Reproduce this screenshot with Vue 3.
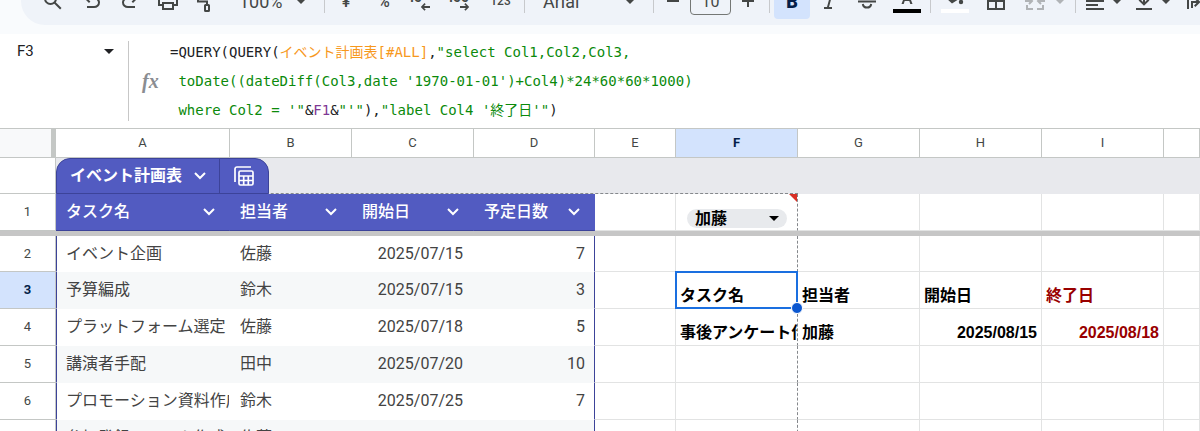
<script setup>
import { ref } from 'vue'

const columns = ['A', 'B', 'C', 'D', 'E', 'F', 'G', 'H', 'I', '']
const tableHeaders = ['タスク名', '担当者', '開始日', '予定日数']

const nameBox = ref('F3')
const fontSize = ref('10')
const person = ref('加藤')
const people = ['加藤', '佐藤', '鈴木', '田中']

const rows = [
  { no: 2, task: 'イベント企画', owner: '佐藤', start: '2025/07/15', days: 7 },
  { no: 3, task: '予算編成', owner: '鈴木', start: '2025/07/15', days: 3, f: 'タスク名', g: '担当者', h: '開始日', i: '終了日' },
  { no: 4, task: 'プラットフォーム選定', owner: '佐藤', start: '2025/07/18', days: 5, f: '事後アンケート作成', g: '加藤', h: '2025/08/15', i: '2025/08/18' },
  { no: 5, task: '講演者手配', owner: '田中', start: '2025/07/20', days: 10 },
  { no: 6, task: 'プロモーション資料作成', owner: '鈴木', start: '2025/07/25', days: 7 },
  { no: 7, task: '参加登録フォーム作成', owner: '佐藤', start: '2025/07/28', days: 3 }
]

const isDate = (value) => /^\d{4}\//.test(value || '')
</script>

<template>
  <div class="sheet-app">
    <header class="top">
      <div class="toolbar" role="toolbar">
        <button class="tool search" aria-label="検索">
          <svg viewBox="0 0 24 24"><g fill="none" stroke="currentColor" stroke-width="2"><circle cx="9.5" cy="9.5" r="5.5" /><path d="M13.5 13.5l6.3 6.3" /></g></svg>
        </button>
        <button class="tool" aria-label="元に戻す">
          <svg viewBox="0 0 24 24"><path d="M7 19v-2h7.1q1.575 0 2.738-1T18 13.5 16.838 11 14.1 10H7.8l2.6 2.6L9 14 4 9l5-5 1.4 1.4L7.8 8h6.3q2.425 0 4.163 1.575T20 13.5t-1.737 3.925T14.1 19z" /></svg>
        </button>
        <button class="tool" aria-label="やり直し">
          <svg viewBox="0 0 24 24"><path d="M9.9 19q-2.425 0-4.163-1.575T4 13.5t1.737-3.925T9.9 8h6.3l-2.6-2.6L15 4l5 5-5 5-1.4-1.4 2.6-2.6H9.9q-1.575 0-2.738 1T6 13.5 7.162 16 9.9 17H17v2z" /></svg>
        </button>
        <button class="tool" aria-label="印刷">
          <svg viewBox="0 0 24 24"><path d="M19 8h-1V3H6v5H5c-1.66 0-3 1.34-3 3v6h4v4h12v-4h4v-6c0-1.66-1.34-3-3-3zM8 5h8v3H8V5zm8 12v2H8v-4h8v2zm2-2v-2H6v2H4v-4c0-.55.45-1 1-1h14c.55 0 1 .45 1 1v4h-2z" /></svg>
        </button>
        <button class="tool" aria-label="書式を貼り付け">
          <svg viewBox="0 0 24 24"><g fill="none" stroke="currentColor" stroke-width="2"><rect x="7" y="3" width="12" height="4" /><path d="M7 5H4v7.5h9V16" /><rect x="11" y="16" width="4" height="6" rx="0.5" /></g></svg>
        </button>
        <button class="tool menu zoom">100%<svg class="caret" viewBox="0 0 10 5"><path d="M0 0h10L5 5z" /></svg></button>
        <span class="divider"></span>
        <button class="tool symbol">¥</button>
        <button class="tool symbol">%</button>
        <button class="tool" aria-label="小数点以下の桁数を減らす">
          <svg viewBox="0 0 24 24"><text x="0" y="13" class="digits">.0</text><path d="M20 17h-6l1.7-1.7-1.2-1.2L10.800 18l3.700 3.800 1.200-1.200L14 19h6z" /></svg>
        </button>
        <button class="tool" aria-label="小数点以下の桁数を増やす">
          <svg viewBox="0 0 24 24"><text x="1" y="13" class="digits">.00</text><path d="M12 17h6l-1.700-1.700 1.200-1.200L21.200 18l-3.700 3.800-1.200-1.200L18 19h-6z" /></svg>
        </button>
        <button class="tool number-format">123</button>
        <span class="divider"></span>
        <button class="tool menu font">Arial<svg class="caret" viewBox="0 0 10 5"><path d="M0 0h10L5 5z" /></svg></button>
        <span class="divider"></span>
        <button class="tool step" aria-label="フォントサイズを縮小">
          <svg viewBox="0 0 24 24"><path d="M6 11h12v2H6z" /></svg>
        </button>
        <input v-model="fontSize" class="font-size" aria-label="フォントサイズ" />
        <button class="tool step" aria-label="フォントサイズを拡大">
          <svg viewBox="0 0 24 24"><path d="M6 11h5V6h2v5h5v2h-5v5h-2v-5H6z" /></svg>
        </button>
        <span class="divider wide"></span>
        <button class="tool bold active">B</button>
        <button class="tool" aria-label="斜体">
          <svg viewBox="0 0 24 24"><path d="M7 20v-2h3l3-11h-3V5h8v2h-3l-3 11h3v2z" /></svg>
        </button>
        <button class="tool" aria-label="取り消し線">
          <svg viewBox="0 0 24 24"><g fill="none" stroke="currentColor" stroke-width="2"><path d="M3 12.500h18M7.800 15c.4 2.600 2 3.600 4.200 3.600s3.800-1 4.200-3.600M16 8c-.5-2-2-3-4-3S8 6 8 8.500" /></g></svg>
        </button>
        <button class="tool text-color" aria-label="テキストの色">
          <svg class="wide-icon" viewBox="0 0 28 24"><path d="M8.500 15L13 3h2l4.500 12h-2.200l-1-3h-4.600l-1 3zM12.400 10h3.200L14 5.400z" /><path fill="#000" d="M0 20h28v4H0z" /></svg>
        </button>
        <span class="divider"></span>
        <button class="tool fill" aria-label="塗りつぶしの色">
          <svg class="wide-icon" viewBox="0 0 28 24"><path d="M10 2l8 8-7 4.500L5 9zM20 9s-2.200 2.800-2.200 4a2.200 2.200 0 0 0 4.400 0c0-1.200-2.200-4-2.200-4z" /><path fill="#fff" d="M0 20h28v4H0z" /></svg>
        </button>
        <button class="tool" aria-label="枠線">
          <svg viewBox="0 0 24 24"><path d="M3 3v18h18V3zm8 16H5v-6h6zm0-8H5V5h6zm8 8h-6v-6h6zm0-8h-6V5h6z" /></svg>
        </button>
        <button class="tool merge" aria-label="セルを結合">
          <svg viewBox="0 0 24 24"><g fill="none" stroke="currentColor" stroke-width="2"><path d="M10 4H4v4M14 4h6v4M4 16v4h6M20 16v4h-6M2 12h7M6 9l3 3-3 3M22 12h-7M18 9l-3 3 3 3" /></g></svg>
          <svg class="caret" viewBox="0 0 10 5"><path d="M0 0h10L5 5z" /></svg>
        </button>
        <span class="divider"></span>
        <button class="tool pair" aria-label="水平方向の配置">
          <svg viewBox="0 0 24 24"><path d="M3 3h18v2H3zM3 7h12v2H3zM3 11h18v2H3zM3 15h12v2H3zM3 19h18v2H3z" /></svg>
          <svg class="caret" viewBox="0 0 10 5"><path d="M0 0h10L5 5z" /></svg>
        </button>
        <button class="tool pair" aria-label="垂直方向の配置">
          <svg viewBox="0 0 24 24"><path d="M11 3h2v10l3-3 1.400 1.400L12 16.800l-5.400-5.400L8 10l3 3zM4 19h16v2H4z" /></svg>
          <svg class="caret" viewBox="0 0 10 5"><path d="M0 0h10L5 5z" /></svg>
        </button>
        <button class="tool" aria-label="テキストを折り返す">
          <svg viewBox="0 0 24 24"><path d="M4 3h2v17H4zM18 3h2v17h-2zM8 12h5.500L11 9.500 12.400 8l5 5-5 5L11 16.500l2.500-2.500H10v5H8z" /></svg>
        </button>
      </div>
    </header>

    <section class="formula-bar">
      <div class="name-box">
        <input v-model="nameBox" aria-label="名前ボックス" />
        <button aria-label="名前付き範囲"><svg class="caret" viewBox="0 0 10 5"><path d="M0 0h10L5 5z" /></svg></button>
      </div>
      <span class="fx">fx</span>
      <div class="formula" role="textbox" aria-label="数式" aria-multiline="true" contenteditable="true" spellcheck="false">
        <div>=QUERY(QUERY(<span class="range">イベント計画表[#ALL]</span>,<span class="str">"select Col1,Col2,Col3,</span></div>
        <div class="str">&nbsp;toDate((dateDiff(Col3,date '1970-01-01')+Col4)*24*60*60*1000)</div>
        <div>&nbsp;<span class="str">where Col2 = '"</span>&amp;<span class="cell-ref">F1</span>&amp;<span class="str">"'"</span>),<span class="str">"label Col4 '終了日'"</span>)</div>
      </div>
    </section>

    <table class="grid">
      <colgroup>
        <col class="col-no" />
        <col class="col-a" />
        <col class="col-std" />
        <col class="col-std" />
        <col class="col-d" />
        <col class="col-e" />
        <col class="col-std" />
        <col class="col-std" />
        <col class="col-std" />
        <col class="col-std" />
        <col />
      </colgroup>
      <thead>
        <tr>
          <th class="corner"></th>
          <th v-for="col in columns" :key="col" :class="{ selected: col === 'F' }">{{ col }}</th>
        </tr>
      </thead>
      <tbody>
        <tr class="tab-row">
          <th></th>
          <td class="band range-top" colspan="6">
            <div class="table-tab">
              <button class="tab-name">
                イベント計画表
                <svg class="chevron" viewBox="0 0 12 8"><path d="M1 1l5 5 5-5" /></svg>
              </button>
              <button class="tab-icon" aria-label="テーブルのビュー">
                <svg viewBox="0 0 20 20"><g fill="none" stroke="currentColor" stroke-width="1.700"><path d="M1 16V3a2 2 0 0 1 2-2h14" /><rect x="5" y="5" width="14" height="14" rx="1.500" /><path d="M5 10h14M5 14.500h14M9.700 10v9M14.300 10v9" /></g></svg>
              </button>
            </div>
          </td>
          <td class="band" colspan="4"></td>
        </tr>
        <tr class="first-row">
          <th>1</th>
          <td v-for="title in tableHeaders" :key="title" class="table-head">
            <div class="head-cell">
              <span>{{ title }}</span>
              <svg class="chevron" viewBox="0 0 12 8"><path d="M1 1l5 5 5-5" /></svg>
            </div>
          </td>
          <td></td>
          <td class="col-f chip-cell">
            <div class="chip">
              <select v-model="person" aria-label="担当者">
                <option v-for="p in people" :key="p">{{ p }}</option>
              </select>
              <svg class="caret" viewBox="0 0 10 5"><path d="M0 0h10L5 5z" /></svg>
            </div>
            <span class="error-mark"></span>
          </td>
          <td></td>
          <td></td>
          <td></td>
          <td></td>
        </tr>
        <tr class="freeze">
          <td colspan="11"></td>
        </tr>
        <tr v-for="row in rows" :key="row.no" :class="{ banded: row.no % 2 === 1 }">
          <th :class="{ selected: row.no === 3 }">{{ row.no }}</th>
          <td class="data first"><div class="clip">{{ row.task }}</div></td>
          <td class="data">{{ row.owner }}</td>
          <td class="data num">{{ row.start }}</td>
          <td class="data num last">{{ row.days }}</td>
          <td></td>
          <td class="result col-f">
            <div class="clip">{{ row.f }}</div>
            <div v-if="row.no === 3" class="cursor"><span class="handle"></span></div>
          </td>
          <td class="result">{{ row.g }}</td>
          <td class="result" :class="{ num: isDate(row.h) }">{{ row.h }}</td>
          <td class="result red" :class="{ num: isDate(row.i) }">{{ row.i }}</td>
          <td></td>
        </tr>
      </tbody>
    </table>
  </div>
</template>

<style>
body {
  margin: 0;
  background: #fff;
}
</style>

<style scoped>
.sheet-app {
  height: 100vh;
  overflow: hidden;
  background: #fff;
  font-family: Roboto, "Noto Sans CJK JP", sans-serif;
  color: #444746;
}

button,
input,
select {
  border: 0;
  margin: 0;
  padding: 0;
  background: none;
  font: inherit;
  color: inherit;
}

svg {
  display: block;
  flex: none;
  fill: currentColor;
}

/* toolbar */
.top {
  display: flex;
  align-items: flex-end;
  height: 25px;
  padding: 0 0 9px 21px;
  background: #f9fbfd;
  overflow: hidden;
}

.toolbar {
  display: flex;
  flex: 1;
  align-items: center;
  box-sizing: border-box;
  min-width: 0;
  height: 48px;
  padding-left: 11px;
  border-radius: 24px 0 0 24px;
  background: #eff3f9;
  overflow: hidden;
}

.tool {
  display: flex;
  flex: none;
  align-items: center;
  justify-content: center;
  width: 38px;
  height: 36px;
}

.tool svg {
  width: 24px;
  height: 24px;
}

.tool svg.wide-icon {
  width: 28px;
}

.tool svg.caret,
.caret {
  width: 10px;
  height: 5px;
}

.tool.search {
  width: 41px;
}

.menu {
  justify-content: space-between;
  box-sizing: border-box;
  padding: 0 16px 0 14px;
  font-size: 18px;
}

.zoom {
  width: 97px;
}

.font {
  width: 124px;
  padding-left: 16px;
}

.symbol {
  font-size: 16px;
  font-weight: 500;
}

.digits {
  font-size: 14px;
  font-weight: 700;
}

.number-format {
  width: 43px;
  font-size: 12px;
  font-weight: 500;
}

.divider {
  flex: none;
  width: 1px;
  height: 24px;
  margin: 0 2px;
  background: #c7c9cc;
}

.divider.wide {
  margin: 0 4px;
}

.tool.step {
  width: 34px;
}

.font-size {
  flex: none;
  box-sizing: border-box;
  width: 41px;
  height: 28px;
  border: 1px solid #747775;
  border-radius: 4px;
  font-size: 16px;
  text-align: center;
}

.bold {
  width: 36px;
  border-radius: 4px;
  font-size: 18px;
  font-weight: 900;
}

.bold.active {
  background: #d3e3fd;
  color: #041e49;
}

.tool.text-color {
  width: 42px;
}

.tool.fill {
  width: 44px;
}

.merge {
  gap: 8px;
  width: 58px;
  color: #b0b3b6;
}

.pair {
  gap: 5px;
  width: 49px;
}

/* formula bar */
.formula-bar {
  display: flex;
  align-items: center;
  height: 94px;
}

.name-box {
  display: flex;
  align-items: flex-start;
  justify-content: space-between;
  box-sizing: border-box;
  width: 129px;
  height: 80px;
  padding: 0 14px 0 17px;
  border-right: 1px solid #c7c7c7;
  color: #202124;
}

.name-box input {
  width: 60px;
  height: 20px;
  font-size: 15px;
}

.name-box button {
  height: 20px;
}

.fx {
  width: 41px;
  box-sizing: border-box;
  padding-left: 13px;
  color: #8a8d91;
  font-family: "Liberation Serif", serif;
  font-size: 20px;
  font-style: italic;
  font-weight: 700;
  line-height: 24px;
}

.formula {
  flex: 1;
  outline: none;
  color: #202124;
  font-family: "DejaVu Sans Mono", "Noto Sans CJK JP", monospace;
  font-size: 14px;
  line-height: 29px;
  white-space: nowrap;
}

.range {
  color: #f7981d;
}

.str {
  color: #0b8a0b;
}

.cell-ref {
  color: #7e3794;
}

/* grid */
.grid {
  width: 100%;
  table-layout: fixed;
  border-collapse: separate;
  border-spacing: 0;
}

.col-no {
  width: 56px;
}

.col-a {
  width: 174px;
}

.col-std {
  width: 122px;
}

.col-d {
  width: 121px;
}

.col-e {
  width: 81px;
}

.grid th,
.grid td {
  box-sizing: border-box;
  height: 37px;
  padding: 0;
  white-space: nowrap;
}

.grid th {
  border-right: 1px solid #c4c7c5;
  border-bottom: 1px solid #c4c7c5;
  font-size: 13px;
  font-weight: 400;
  line-height: 16px;
}

.grid td {
  border-right: 1px solid #e2e3e3;
  border-bottom: 1px solid #e2e3e3;
  font-size: 16px;
  line-height: 24px;
}

.grid thead th {
  height: 30px;
  border-top: 1px solid #c4c7c5;
}

.grid thead th.corner {
  border-right: 5px solid #c4c7c5;
  background: #f8f9fa;
}

.grid th.selected {
  background: #d3e3fd;
  color: #041e49;
  font-weight: 700;
}

.grid .tab-row th,
.grid .tab-row td,
.grid .freeze + tr th,
.grid .freeze + tr td {
  height: 36px;
}

.grid td.band {
  border: 0;
  background: #e8e9ed;
  vertical-align: bottom;
}

.grid td.range-top {
  border-bottom: 1px dashed #85888c;
}

.table-tab {
  display: flex;
  position: relative;
  width: 213px;
  height: 36px;
  box-sizing: border-box;
  margin-bottom: -1px;
  border: 1px solid #3c4399;
  border-radius: 14px 14px 0 0;
  background: #525bc1;
  color: #fff;
}

.table-tab button {
  display: flex;
  align-items: center;
  justify-content: center;
}

.tab-name {
  flex: 1;
  gap: 12px;
  border-right: 1px solid #3c4399;
  font-weight: 700;
  font-size: 16px;
}

.tab-icon {
  width: 48px;
}

.tab-icon svg {
  width: 20px;
  height: 20px;
}

.chevron {
  width: 12px;
  height: 8px;
  fill: none;
  stroke: currentColor;
  stroke-width: 2;
}

.grid td.table-head {
  border-right-color: #525bc1;
  border-bottom-color: #3c4399;
  background: #525bc1;
  color: #fff;
  font-weight: 500;
}

.head-cell {
  display: flex;
  align-items: center;
  justify-content: space-between;
  padding: 0 14px 0 10px;
}

.grid td.col-f {
  position: relative;
  border-right: 1px dashed #85888c;
}

.grid td.chip-cell {
  padding: 12px 10px 0 11px;
}

.chip {
  display: flex;
  position: relative;
  align-items: center;
  height: 19px;
  border-radius: 10px;
  background: #e8eaed;
  color: #000;
}

.chip select {
  flex: 1;
  height: 19px;
  padding-left: 8px;
  appearance: none;
  font-family: "Liberation Sans", "Noto Sans CJK JP", sans-serif;
  font-size: 16px;
  font-weight: 700;
  line-height: 19px;
}

.chip .caret {
  position: absolute;
  right: 8px;
  pointer-events: none;
}

.error-mark {
  position: absolute;
  top: 0;
  right: 0;
  border-top: 8px solid #d93025;
  border-left: 8px solid transparent;
}

.grid .freeze td {
  height: 5px;
  border: 0;
  background: #c6c6c6;
  line-height: 0;
}

.grid td.data {
  padding: 0 10px;
  border-color: transparent;
  color: #434343;
}

.grid td.first {
  padding: 0 0 0 9px;
  border-left: 1px solid #3c4399;
}

.grid td.last {
  padding-right: 9px;
  border-right-color: #3c4399;
}

.banded .data {
  background: #f6f8f9;
}

.clip {
  overflow: hidden;
}

.grid td.num {
  text-align: right;
}

.grid td.result {
  padding: 0 4px;
  color: #000;
  font-family: "Liberation Sans", "Noto Sans CJK JP", sans-serif;
  font-weight: 700;
  vertical-align: bottom;
}

.grid td.result.col-f {
  padding-right: 0;
}

.grid td.red {
  color: #990000;
}

.cursor {
  position: absolute;
  z-index: 1;
  inset: -1px;
  border: 2px solid #1a6fe0;
}

.handle {
  position: absolute;
  right: -7px;
  bottom: -7px;
  width: 10px;
  height: 10px;
  border: 1px solid #fff;
  border-radius: 50%;
  background: #0b57d0;
}
</style>
